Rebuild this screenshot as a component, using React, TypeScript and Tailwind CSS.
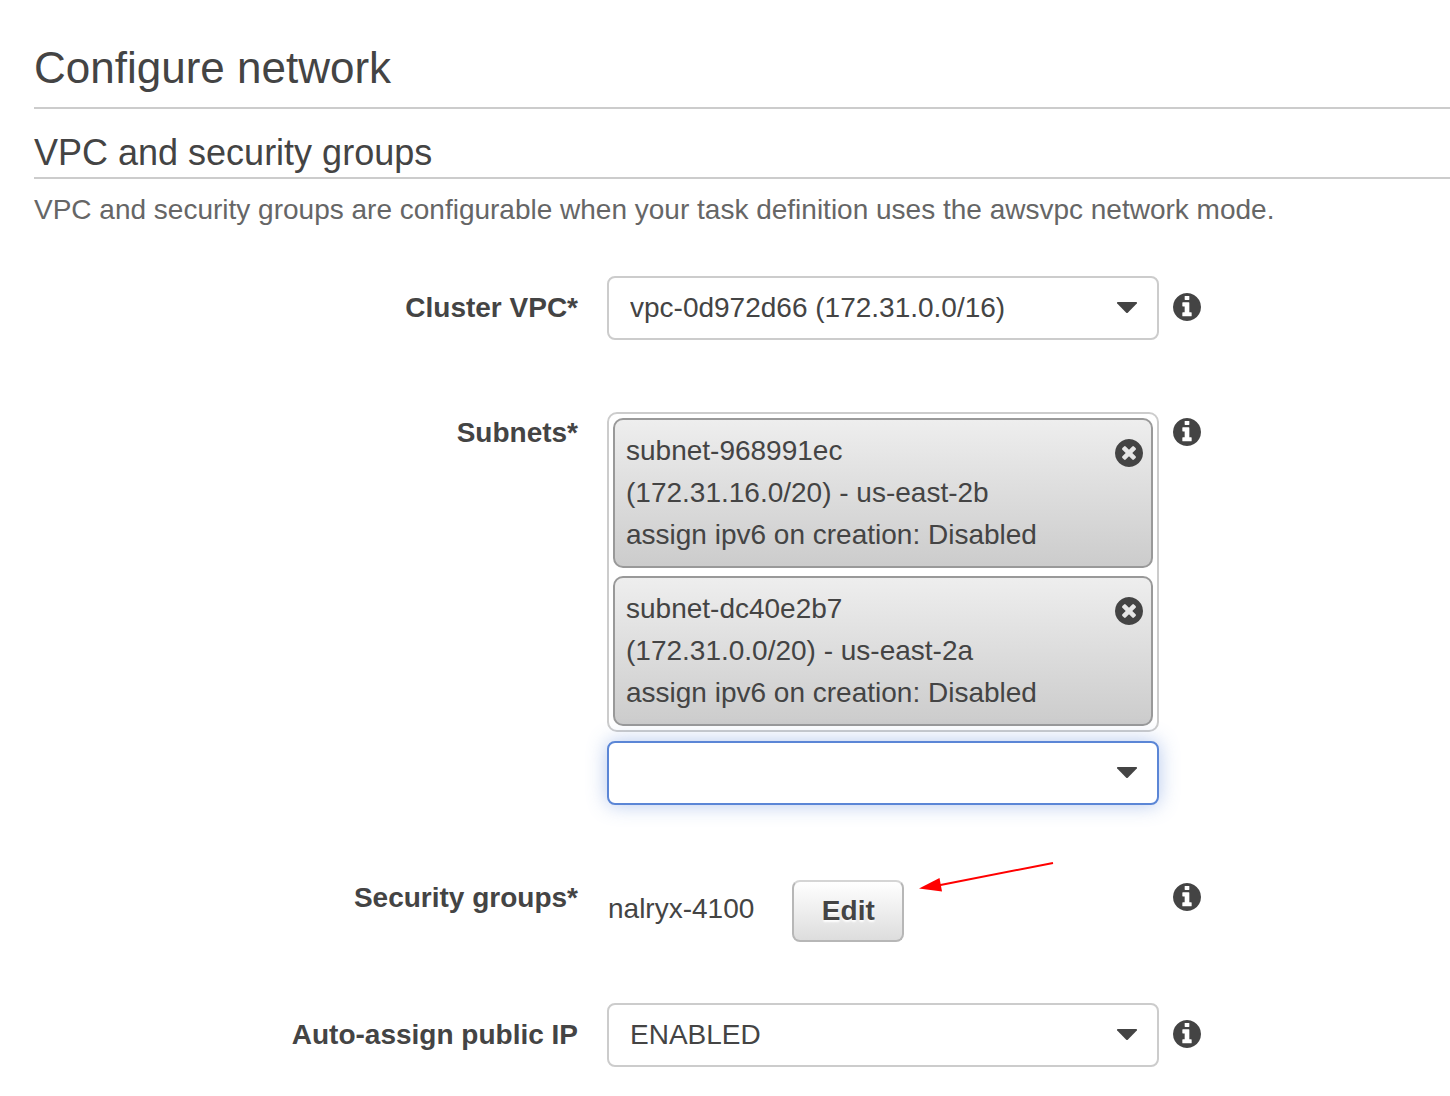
import React, { useState } from "react";

function InfoIcon() {
  return (
    <svg viewBox="128 128 1536 1536" className="size-7" fill="currentColor" aria-hidden="true">
      <path d="M1152 1376v-160q0-14-9-23t-23-9h-96v-512q0-14-9-23t-23-9h-320q-14 0-23 9t-9 23v160q0 14 9 23t23 9h96v320h-96q-14 0-23 9t-9 23v160q0 14 9 23t23 9h448q14 0 23-9t9-23zm-128-896v-160q0-14-9-23t-23-9h-192q-14 0-23 9t-9 23v160q0 14 9 23t23 9h192q14 0 23-9t9-23zm640 416q0 209-103 385.5t-279.5 279.5-385.5 103-385.5-103-279.5-279.5-103-385.5 103-385.5 279.5-279.5 385.5-103 385.5 103 279.5 279.5 103 385.5z" />
    </svg>
  );
}

function RemoveIcon() {
  return (
    <svg viewBox="128 128 1536 1536" className="size-7" fill="currentColor" aria-hidden="true">
      <path d="M1277 1122q0-26-19-45l-181-181 181-181q19-19 19-45 0-27-19-46l-90-90q-19-19-46-19-26 0-45 19l-181 181-181-181q-19-19-45-19-27 0-46 19l-90 90q-19 19-19 46 0 26 19 45l181 181-181 181q-19 19-19 45 0 27 19 46l90 90q19 19 46 19 26 0 45-19l181-181 181 181q19 19 45 19 27 0 46-19l90-90q19-19 19-46zm387-226q0 209-103 385.5t-279.5 279.5-385.5 103-385.5-103-279.5-279.5-103-385.5 103-385.5 279.5-279.5 385.5-103 385.5 103 279.5 279.5 103 385.5z" />
    </svg>
  );
}

type SelectProps = { id: string; options: string[]; focused?: boolean };

function Select({ id, options, focused = false }: SelectProps) {
  return (
    <div className="relative">
      <select
        id={id}
        className={
          "block h-16 w-full appearance-none rounded-lg border-2 bg-white pr-14 pl-[21px] text-[28px] outline-none " +
          (focused
            ? "border-[#5b86d6] shadow-[0_0_20px_rgba(91,134,214,0.45)]"
            : "border-[#cccccc] focus:border-[#5b86d6]")
        }
      >
        {options.map((option) => (
          <option key={option}>{option}</option>
        ))}
      </select>
      <svg
        viewBox="0 0 22 12"
        className="pointer-events-none absolute top-[25px] right-[21px] h-3 w-[22px]"
        fill="currentColor"
        aria-hidden="true"
      >
        <path d="M2 1H20Q21.6 1 20.8 2.4L12 11.6Q11 12.6 10 11.6L1.2 2.4Q.4 1 2 1Z" />
      </svg>
    </div>
  );
}

type RowProps = {
  label: string;
  htmlFor: string;
  className: string;
  labelClass?: string;
  children: React.ReactNode;
};

function Row({ label, htmlFor, className, labelClass = "", children }: RowProps) {
  return (
    <div className={"grid grid-cols-[559fr_552fr_277fr] items-start gap-x-[14px] " + className}>
      <label
        htmlFor={htmlFor}
        className={"block pr-[15px] text-right leading-[42px] font-bold " + labelClass}
      >
        {label}
      </label>
      <div>{children}</div>
      <div className={"flex h-10 items-center " + labelClass}>
        <button type="button" aria-label={"About " + label} className="box-content size-7">
          <InfoIcon />
        </button>
      </div>
    </div>
  );
}

const initialSubnets = [
  { id: "subnet-968991ec", cidr: "(172.31.16.0/20) - us-east-2b", ipv6: "assign ipv6 on creation: Disabled" },
  { id: "subnet-dc40e2b7", cidr: "(172.31.0.0/20) - us-east-2a", ipv6: "assign ipv6 on creation: Disabled" },
];

export default function App() {
  const [subnets, setSubnets] = useState(initialSubnets);

  return (
    <main className="min-h-screen bg-white pt-10 pb-7 pl-[34px] font-['Liberation_Sans',Arial,sans-serif] text-[28px] text-[#444444]">
      <h1 className="border-b-2 border-[#cccccc] pb-3 text-[44px] leading-[55px]">Configure network</h1>
      <h2 className="mt-6 border-b-2 border-[#cccccc] pb-1 text-[36px] leading-[40px]">VPC and security groups</h2>
      <p className="mt-[10px] leading-[42px] text-[#666666]">
        VPC and security groups are configurable when your task definition uses the awsvpc network mode.
      </p>

      <form onSubmit={(event) => event.preventDefault()}>
        <Row label="Cluster VPC*" htmlFor="vpc" className="mt-[45px]" labelClass="mt-[11px]">
          <Select id="vpc" options={["vpc-0d972d66 (172.31.0.0/16)"]} />
        </Row>

        <Row label="Subnets*" htmlFor="subnets" className="mt-[72px]">
          <ul className="flex flex-col gap-2 rounded-[10px] border-2 border-[#cccccc] p-1">
            {subnets.map((subnet) => (
              <li
                key={subnet.id}
                className="flex items-start justify-between rounded-[10px] border-2 border-[#999999] bg-linear-to-b from-[#eeeeee] to-[#cccccc] py-[10px] pr-2 pl-[11px] leading-[42px]"
              >
                <div>
                  <div>{subnet.id}</div>
                  <div>{subnet.cidr}</div>
                  <div>{subnet.ipv6}</div>
                </div>
                <button
                  type="button"
                  aria-label={"Remove " + subnet.id}
                  className="mt-[9px]"
                  onClick={() => setSubnets(subnets.filter((item) => item.id !== subnet.id))}
                >
                  <RemoveIcon />
                </button>
              </li>
            ))}
          </ul>
          <div className="mt-[9px]">
            <Select id="subnets" options={[""]} focused />
          </div>
        </Row>

        <Row label="Security groups*" htmlFor="edit-groups" className="mt-[72px]">
          <div className="relative mt-[3px] flex items-start pl-px">
            <span className="pt-2 leading-[42px]">nalryx-4100</span>
            <button
              id="edit-groups"
              type="button"
              className="ml-[38px] h-[62px] w-28 rounded-lg border-2 border-[#b7b7b7] border-t-[#d5d5d5] bg-linear-to-b from-white to-[#dddddd] font-bold [text-shadow:0_2px_2px_#ffffff]"
            >
              Edit
            </button>
            <svg
              viewBox="0 0 136 32"
              className="absolute -top-5 left-[311px] h-8 w-[136px]"
              aria-hidden="true"
            >
              <path d="M135 3L20 25.5" stroke="#ff0000" strokeWidth="2" />
              <path d="M1 28.5L21.5 18L24 31.5Z" fill="#ff0000" />
            </svg>
          </div>
        </Row>

        <Row label="Auto-assign public IP" htmlFor="public-ip" className="mt-[61px]" labelClass="mt-[11px]">
          <Select id="public-ip" options={["ENABLED"]} />
        </Row>
      </form>
    </main>
  );
}
